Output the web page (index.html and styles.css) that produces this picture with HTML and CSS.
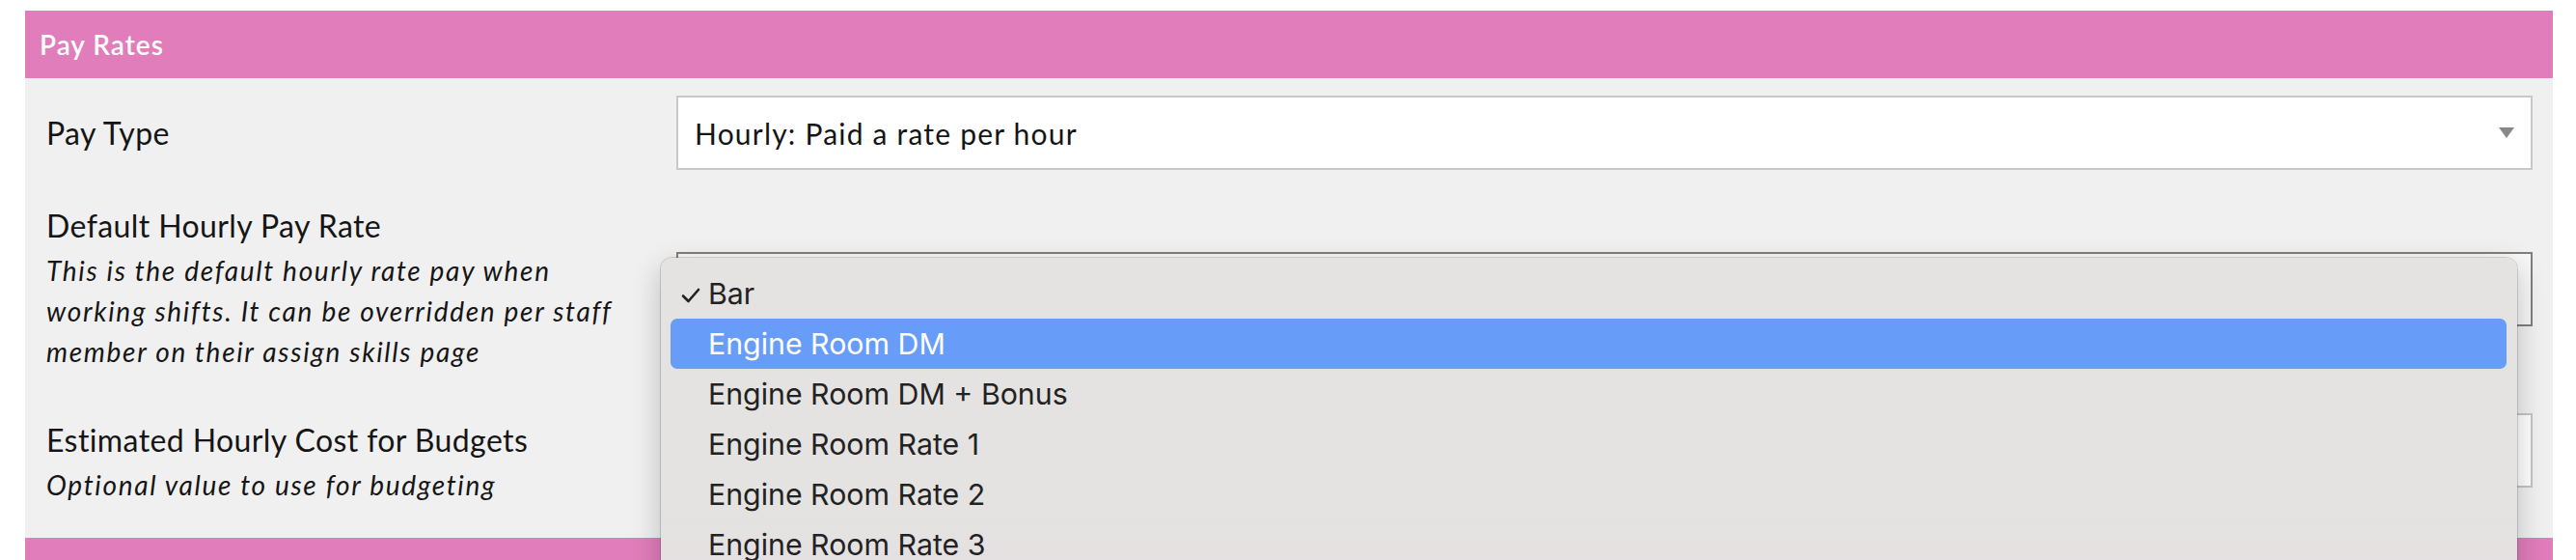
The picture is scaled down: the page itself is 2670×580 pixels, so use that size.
FILE: index.html
```html
<!DOCTYPE html>
<html>
<head>
    <title>Pay Rates</title>
    <link rel="stylesheet" href="styles.css">
</head>
<body>
    <div class="page">
        <div class="panel">
            <div class="panel-heading">Pay Rates</div>
            <div class="panel-body">
                <div class="form-row row-type">
                    <label class="field-label">Pay Type</label>
                    <div class="field">
                        <div class="select">
                            <span>Hourly: Paid a rate per hour</span>
                            <svg class="caret" width="16" height="11" viewBox="0 0 16 11"><path d="M0 0 H16 L8 11 Z" fill="#888"/></svg>
                        </div>
                    </div>
                </div>
                <div class="form-row row-rate">
                    <div class="label-block">
                        <label class="field-label">Default Hourly Pay Rate</label>
                        <p class="help">This is the default hourly rate pay when working shifts. It can be overridden per staff member on their assign skills page</p>
                    </div>
                    <div class="field">
                        <div class="select select-open"></div>
                        <!-- native option list, drawn open -->
                        <ul class="dropdown">
                            <li class="checked">
                                <svg class="tick" width="20" height="16" viewBox="0 0 20 16"><path d="M2 8.5 L7.5 14 L18 2" fill="none" stroke="#222" stroke-width="2.6" stroke-linecap="round" stroke-linejoin="round"/></svg>
                                Bar
                            </li>
                            <li class="active">Engine Room DM</li>
                            <li>Engine Room DM + Bonus</li>
                            <li>Engine Room Rate 1</li>
                            <li>Engine Room Rate 2</li>
                            <li>Engine Room Rate 3</li>
                        </ul>
                    </div>
                </div>
                <div class="form-row row-cost">
                    <div class="label-block">
                        <label class="field-label">Estimated Hourly Cost for Budgets</label>
                        <p class="help">Optional value to use for budgeting</p>
                    </div>
                    <div class="field">
                        <input type="text" class="input">
                    </div>
                </div>
            </div>
            <div class="panel-heading panel-next"></div>
        </div>
    </div>
</body>
</html>
```

FILE: styles.css
```css
body {
    margin: 0;
    background-color: #ffffff;
    font-family: Lato, "Open Sans", sans-serif;
    color: #151515;
    overflow: hidden;
    height: 580px;
}
.page {
    padding: 11px 24px 0 26px;
}
.panel {
    background-color: #f0f0f0;
}
.panel-heading {
    background-color: #e07dba;
    color: #ffffff;
    height: 70px;
    line-height: 70px;
    padding-left: 15px;
    font-size: 28px;
    font-weight: 600;
    letter-spacing: 1px;
}
.panel-body {
    padding: 0 21px;
}
.form-row {
    display: grid;
    grid-template-columns: 654px 1fr;
    align-items: center;
}
.row-type {
    padding-top: 18px;
}
.row-rate {
    padding: 37px 0 43px;
}
.row-cost {
    align-items: start;
    padding-bottom: 34px;
}
.row-cost .label-block {
    margin-top: 7px;
}
.field-label {
    display: block;
    font-size: 32px;
    line-height: 42px;
    letter-spacing: 0.4px;
    padding-left: 1px;
}
.help {
    margin: 4px 0 0;
    font-size: 28px;
    line-height: 42px;
    letter-spacing: 1.7px;
    font-style: italic;
    padding-left: 1px;
    max-width: 600px;
}
.field {
    position: relative;
}
.select {
    box-sizing: border-box;
    height: 77px;
    background-color: #ffffff;
    border: 2px solid #c8c8c8;
    display: flex;
    align-items: center;
    justify-content: space-between;
    padding: 0 17px;
    font-size: 30px;
    letter-spacing: 1.2px;
}
.select-open {
    border-color: #7f7f7f;
    background-color: #f7f7f7;
}
.input {
    box-sizing: border-box;
    display: block;
    width: 100%;
    height: 77px;
    background-color: #ffffff;
    border: 2px solid #c4c4c4;
    margin: 0;
}
.dropdown {
    position: absolute;
    z-index: 5;
    left: -16px;
    top: 6px;
    width: 1924px;
    height: 360px;
    box-sizing: border-box;
    margin: 0;
    padding: 11px 11px 0 10px;
    list-style: none;
    border-radius: 12px;
    background: linear-gradient(#e4e3e1 0%, #e4e3e1 70%, #e6dfe3 100%);
    box-shadow: 0 0 0 1px rgba(0, 0, 0, 0.14), 0 10px 30px rgba(0, 0, 0, 0.22);
    font-family: Inter, Roboto, sans-serif;
    font-size: 30.3px;
    color: #222222;
}
.dropdown li {
    position: relative;
    height: 52px;
    line-height: 52px;
    padding-left: 39px;
    border-radius: 7px;
}
.dropdown li.active {
    background-color: #679cf8;
    color: #ffffff;
}
.tick {
    position: absolute;
    left: 11px;
    top: 20px;
}
.panel-next {
    height: 40px;
}
```
